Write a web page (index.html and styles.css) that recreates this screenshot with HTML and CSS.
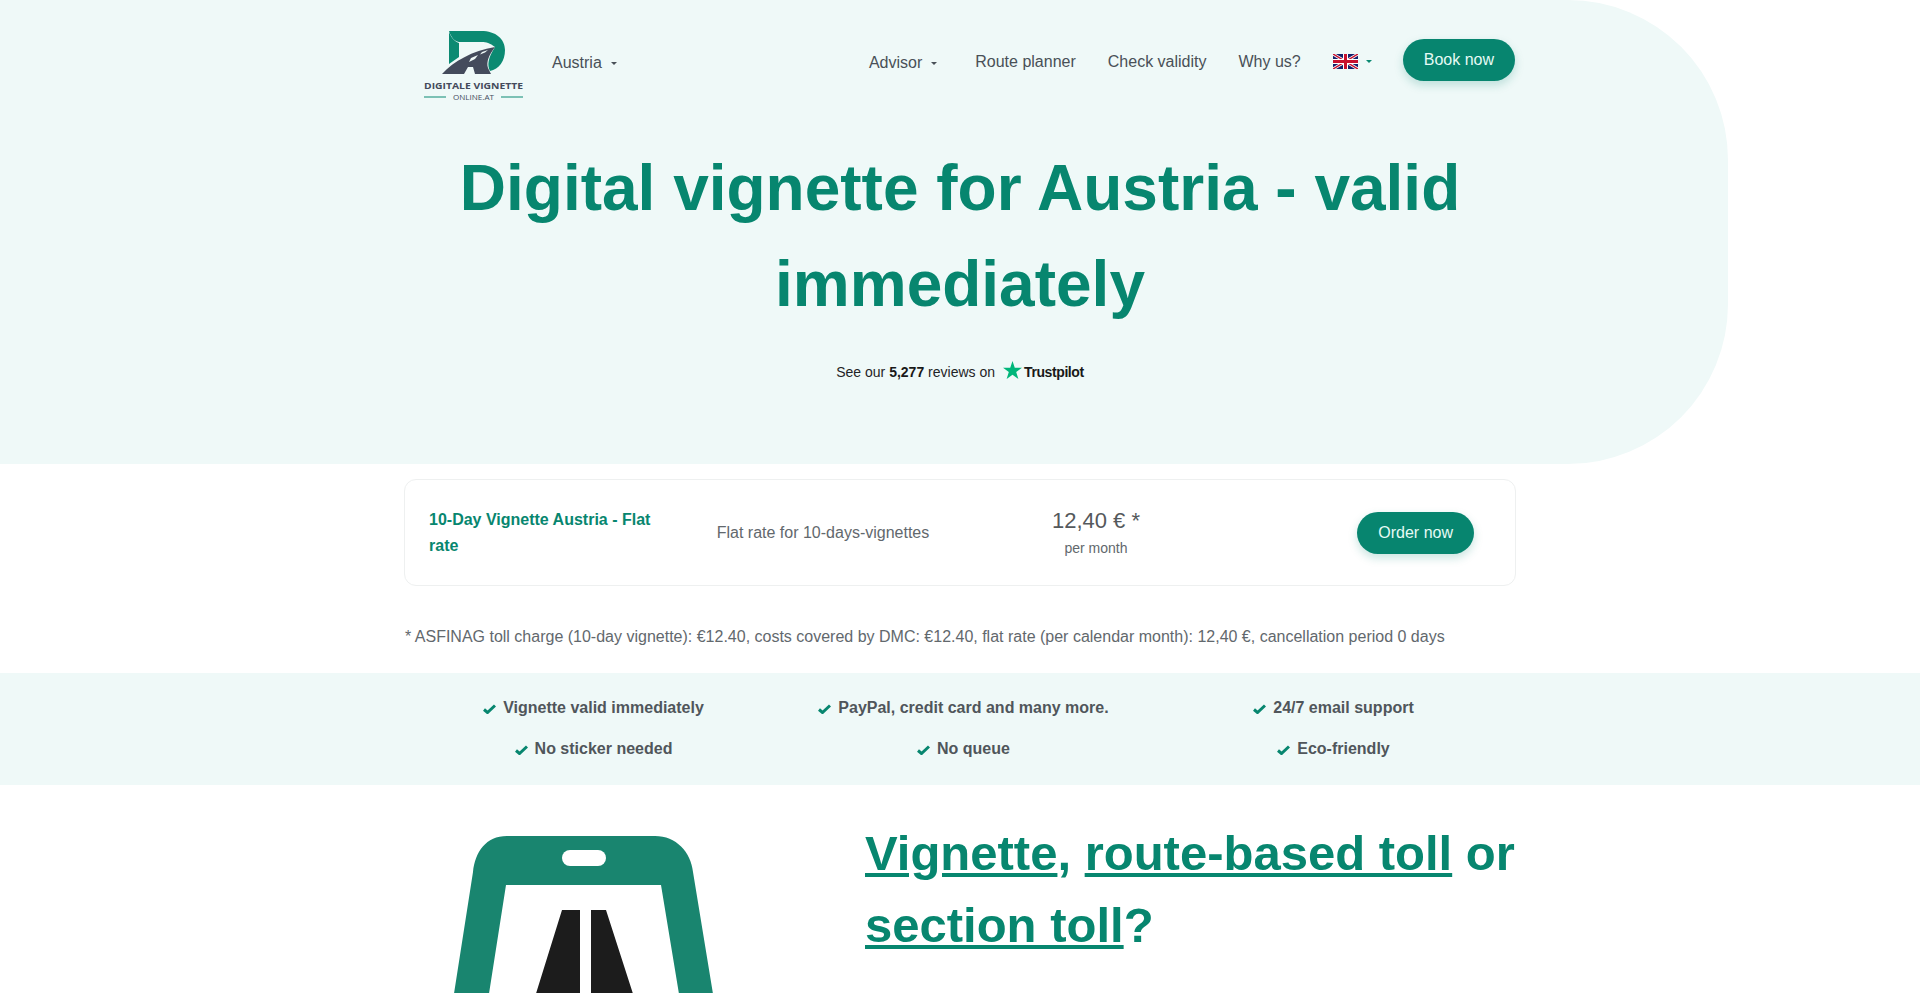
FILE: index.html
```html
<!DOCTYPE html>
<html lang="en">
<head>
  <meta charset="utf-8">
  <title>Digital vignette for Austria</title>
  <link rel="stylesheet" href="styles.css">
</head>
<body>
  <header class="hero">
    <nav class="nav">
      <a class="logo" href="#">
        <svg class="logo-img" viewBox="0 0 99 68">
          <path class="logo-teal" d="M25 0H57C72 0 81 8 81 19C81 30 75 38 66 40C63 34 64 27 71 16C66 12 62 11 58 11H35C30 10 27 6 25 0Z"/>
          <path class="logo-teal" d="M25 1C27 6 30 10 35 12V26L25 33Z"/>
          <path class="logo-dark" d="M18 43C30 30 48 20 71 16C65 24 62 31 64 37L67 43H51L49 36H44L40 43Z"/>
          <path class="logo-gap" d="M47 27L54 24L51 28L45 31ZM58 21L64 19L61 21.500L56 23.500Z"/>
          <text class="logo-name" x="0" y="58" textLength="99" lengthAdjust="spacingAndGlyphs">DIGITALE VIGNETTE</text>
          <text class="logo-sub" x="29" y="68.500" textLength="41" lengthAdjust="spacingAndGlyphs">ONLINE.AT</text>
          <rect class="logo-teal" x="0" y="65.500" width="22" height="1"/>
          <rect class="logo-teal" x="77" y="65.500" width="22" height="1"/>
        </svg>
      </a>
      <a class="nav-link country" href="#">Austria<span class="caret"></span></a>
      <div class="nav-right">
        <a class="nav-link advisor" href="#">Advisor<span class="caret"></span></a>
        <a class="nav-link" href="#">Route planner</a>
        <a class="nav-link" href="#">Check validity</a>
        <a class="nav-link" href="#">Why us?</a>
        <a class="nav-link lang" href="#">
          <svg class="flag" viewBox="0 0 25 15">
            <rect width="25" height="15" fill="#14206B"/>
            <path d="M0 0L25 15M25 0L0 15" stroke="#fff" stroke-width="3"/>
            <path d="M0 0L25 15M25 0L0 15" stroke="#C8102E" stroke-width="1.500"/>
            <path d="M12.500 0V15M0 7.500H25" stroke="#fff" stroke-width="5"/>
            <path d="M12.500 0V15M0 7.500H25" stroke="#C8102E" stroke-width="3"/>
          </svg>
          <span class="caret caret-teal"></span>
        </a>
        <a class="btn btn-nav" href="#">Book now</a>
      </div>
    </nav>
    <h1 class="hero-title">Digital vignette for Austria - valid immediately</h1>
    <div class="trust">
      <span>See our <b>5,277</b> reviews on</span>
      <svg class="trust-star" viewBox="0 0 20 19">
        <path d="M10 0L12.400 7.200H20L13.900 11.700L16.200 19L10 14.500L3.800 19L6.100 11.700L0 7.200H7.600Z"/>
      </svg>
      <span class="trust-name">Trustpilot</span>
    </div>
  </header>

  <section class="offer">
    <div class="card">
      <div class="card-title">10-Day Vignette Austria - Flat rate</div>
      <div class="card-desc">Flat rate for 10-days-vignettes</div>
      <div class="card-price">
        <div class="price">12,40 € *</div>
        <div class="price-unit">per month</div>
      </div>
      <div class="card-action"><a class="btn" href="#">Order now</a></div>
    </div>
    <p class="footnote">* ASFINAG toll charge (10-day vignette): €12.40, costs covered by DMC: €12.40, flat rate (per calendar month): 12,40 €, cancellation period 0 days</p>
  </section>

  <section class="usp">
    <ul class="usp-list">
      <li><svg class="check" viewBox="0 0 13 10"><path d="M1 5.500L4.500 8.500L12 1.500"/></svg>Vignette valid immediately</li>
      <li><svg class="check" viewBox="0 0 13 10"><path d="M1 5.500L4.500 8.500L12 1.500"/></svg>PayPal, credit card and many more.</li>
      <li><svg class="check" viewBox="0 0 13 10"><path d="M1 5.500L4.500 8.500L12 1.500"/></svg>24/7 email support</li>
      <li><svg class="check" viewBox="0 0 13 10"><path d="M1 5.500L4.500 8.500L12 1.500"/></svg>No sticker needed</li>
      <li><svg class="check" viewBox="0 0 13 10"><path d="M1 5.500L4.500 8.500L12 1.500"/></svg>No queue</li>
      <li><svg class="check" viewBox="0 0 13 10"><path d="M1 5.500L4.500 8.500L12 1.500"/></svg>Eco-friendly</li>
    </ul>
  </section>

  <section class="intro">
    <svg class="phone" viewBox="0 0 290 170">
      <path class="phone-body" fill-rule="evenodd" d="M67 6H215C236 6 251 22 253 42L274 170H13L33 42C35 22 46 6 67 6ZM66 55L48 170H240L221 55Z"/>
      <rect class="phone-pill" x="122" y="20" width="44" height="16" rx="8"/>
      <path class="phone-road" d="M122 80H140V170H94ZM151 80H166L195 170H151Z"/>
    </svg>
    <h2 class="intro-title"><a href="#">Vignette</a>, <a href="#">route-based toll</a> or<br><a href="#">section toll</a>?</h2>
  </section>
</body>
</html>
```

FILE: styles.css
```css
body{
  margin: 0;
  height: 993px;
  overflow: hidden;
  background-color: #FFFFFF;
  font-family: "Liberation Sans", Arial, sans-serif;
  font-size: 16px;
  line-height: 24px;
  color: #495057;
}

a{
  color: inherit;
  text-decoration: none;
}

.hero{
  width: 1728px;
  height: 464px;
  background-color: #EFF9F8;
  border-radius: 0 160px 160px 0;
  overflow: hidden;
}

.nav{
  display: flex;
  align-items: flex-start;
  width: 1110px;
  height: 108px;
  margin-left: 405px;
  padding: 31px 0 0 19px;
  box-sizing: border-box;
}

.logo{
  display: block;
  height: 68px;
}

.logo-img{
  display: block;
  width: 99px;
  height: 68px;
  overflow: visible;
}

.logo-teal{
  fill: #0B8A72;
}

.logo-dark{
  fill: #444B5C;
}

.logo-gap{
  fill: #EFF9F8;
}

.logo-name{
  font-family: "Open Sans", sans-serif;
  font-weight: 700;
  font-size: 8px;
  fill: #444B5C;
}

.logo-sub{
  font-family: "Open Sans", sans-serif;
  font-size: 7px;
  fill: #444B5C;
}

.nav-link{
  display: flex;
  align-items: center;
  height: 24px;
  margin-top: 19px;
  white-space: nowrap;
}

.country{
  margin-left: 29px;
  margin-top: 20px;
}

.nav-right{
  display: flex;
  align-items: flex-start;
  gap: 32px;
  margin-left: auto;
}

.advisor{
  margin-right: 6px;
  margin-top: 20px;
}

.lang{
  gap: 8px;
  margin-top: 18px;
  margin-right: -1px;
}

.caret{
  width: 0;
  height: 0;
  margin-left: 9px;
  border-top: 3px solid #495057;
  border-left: 3px solid transparent;
  border-right: 3px solid transparent;
}

.caret-teal{
  margin-left: 0;
  border-top-color: #0B8A72;
}

.flag{
  display: block;
  width: 25px;
  height: 15px;
}

.btn{
  display: inline-block;
  padding: 9px 21px;
  border-radius: 21px;
  background-color: #07856F;
  color: #E6FBF5;
  box-shadow: 0 4px 10px rgba(10, 130, 112, 0.22);
  white-space: nowrap;
}

.btn-nav{
  margin-top: 8px;
}

.hero-title{
  width: 1110px;
  margin: 32px 0 0 405px;
  font-size: 64px;
  line-height: 96px;
  font-weight: 700;
  text-align: center;
  color: #07866F;
}

.trust{
  display: flex;
  align-items: center;
  justify-content: center;
  width: 1110px;
  height: 24px;
  margin: 28px 0 0 405px;
  font-size: 14px;
  color: #1F2426;
}

.trust b{
  color: #191919;
}

.trust-star{
  width: 19px;
  height: 18px;
  margin: -4px 2px 0 8px;
  fill: #00B67A;
}

.trust-name{
  font-weight: 700;
  font-size: 14px;
  letter-spacing: -0.400px;
  color: #191919;
}

.offer{
  width: 1112px;
  margin: 15px 0 0 404px;
}

.card{
  display: grid;
  grid-template-columns: 240px 308px 238px 1fr;
  align-items: center;
  height: 107px;
  box-sizing: border-box;
  padding: 0 41px 0 24px;
  border: 1px solid #EEF0F0;
  border-radius: 12px;
}

.card-title{
  font-weight: 700;
  line-height: 26px;
  color: #07866F;
}

.card-desc{
  text-align: center;
  color: #62686D;
}

.card-price{
  text-align: center;
}

.price{
  font-size: 22px;
  line-height: 30px;
  color: #55595C;
}

.price-unit{
  font-size: 14px;
  line-height: 24px;
  color: #62686D;
}

.card-action{
  text-align: right;
}

.footnote{
  margin: 39px 0 0 1px;
  color: #62686D;
}

.usp{
  margin-top: 24px;
  padding: 23px 0 24px;
  background-color: #EFF9F8;
}

.usp-list{
  display: grid;
  grid-template-columns: repeat(3, 370px);
  row-gap: 17px;
  width: 1110px;
  margin: 0 0 0 405px;
  padding: 0;
  list-style: none;
  color: #50565B;
}

.usp-list li{
  display: flex;
  align-items: center;
  justify-content: center;
  padding-left: 7px;
  font-weight: 700;
}

.check{
  width: 13px;
  height: 10px;
  margin: 2px 7px 0 0;
  fill: none;
  stroke: #07866F;
  stroke-width: 3;
}

.intro{
  display: grid;
  grid-template-columns: 459px 1fr;
  width: 1120px;
  height: 208px;
  margin-left: 405px;
  overflow: hidden;
}

.phone{
  display: block;
  width: 290px;
  height: 170px;
  margin: 45px 0 0 35px;
}

.phone-body{
  fill: #19856F;
}

.phone-pill{
  fill: #FFFFFF;
}

.phone-road{
  fill: #1C1C1C;
}

.intro-title{
  margin: 32px 0 0 1px;
  font-size: 49px;
  line-height: 72px;
  font-weight: 700;
  white-space: nowrap;
  color: #07866F;
}

.intro-title a{
  text-decoration: underline;
}
```
